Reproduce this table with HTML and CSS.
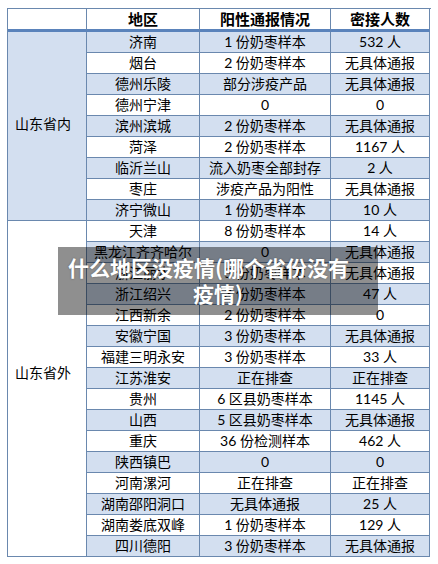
FILE: index.html
```html
<!DOCTYPE html>
<html lang="zh-CN">
<head>
<meta charset="utf-8">
<title>什么地区没疫情</title>
<link rel="stylesheet" href="styles.css">
</head>
<body>
<div class="page">
  <div class="grid">
    <div class="c h"></div>
    <div class="c h">地区</div>
    <div class="c h">阳性通报情况</div>
    <div class="c h">密接人数</div>

    <div class="c prov in">山东省内</div>
    <div class="c b">济南</div><div class="c b">1 份奶枣样本</div><div class="c b">532 人</div>
    <div class="c">烟台</div><div class="c">2 份奶枣样本</div><div class="c">无具体通报</div>
    <div class="c b">德州乐陵</div><div class="c b">部分涉疫产品</div><div class="c b">无具体通报</div>
    <div class="c">德州宁津</div><div class="c">0</div><div class="c">0</div>
    <div class="c b">滨州滨城</div><div class="c b">2 份奶枣样本</div><div class="c b">无具体通报</div>
    <div class="c">菏泽</div><div class="c">2 份奶枣样本</div><div class="c">1167 人</div>
    <div class="c b">临沂兰山</div><div class="c b">流入奶枣全部封存</div><div class="c b">2 人</div>
    <div class="c">枣庄</div><div class="c">涉疫产品为阳性</div><div class="c">无具体通报</div>
    <div class="c b">济宁微山</div><div class="c b">1 份奶枣样本</div><div class="c b">10 人</div>

    <div class="c prov out">山东省外</div>
    <div class="c">天津</div><div class="c">8 份奶枣样本</div><div class="c">14 人</div>
    <div class="c b">黑龙江齐齐哈尔</div><div class="c b">0</div><div class="c b">无具体通报</div>
    <div class="c">浙江丽水</div><div class="c">5 份奶枣样本</div><div class="c">无具体通报</div>
    <div class="c b">浙江绍兴</div><div class="c b">3 份奶枣样本</div><div class="c b">47 人</div>
    <div class="c">江西新余</div><div class="c">2 份奶枣样本</div><div class="c">0</div>
    <div class="c b">安徽宁国</div><div class="c b">3 份奶枣样本</div><div class="c b">无具体通报</div>
    <div class="c">福建三明永安</div><div class="c">3 份奶枣样本</div><div class="c">33 人</div>
    <div class="c b">江苏淮安</div><div class="c b">正在排查</div><div class="c b">正在排查</div>
    <div class="c">贵州</div><div class="c">6 区县奶枣样本</div><div class="c">1145 人</div>
    <div class="c b">山西</div><div class="c b">5 区县奶枣样本</div><div class="c b">无具体通报</div>
    <div class="c">重庆</div><div class="c">36 份检测样本</div><div class="c">462 人</div>
    <div class="c b">陕西镇巴</div><div class="c b">0</div><div class="c b">0</div>
    <div class="c">河南漯河</div><div class="c">正在排查</div><div class="c">正在排查</div>
    <div class="c b">湖南邵阳洞口</div><div class="c b">无具体通报</div><div class="c b">25 人</div>
    <div class="c">湖南娄底双峰</div><div class="c">1 份奶枣样本</div><div class="c">129 人</div>
    <div class="c b">四川德阳</div><div class="c b">3 份奶枣样本</div><div class="c b">无具体通报</div>
  </div>
  <div class="banner">
    <div class="l1">什么地区没疫情(哪个省份没有</div>
    <div class="l2">疫情)</div>
  </div>
</div>
</body>
</html>
```

FILE: styles.css
```css
html, body {
  margin: 0;
  padding: 0;
  background: #ffffff;
}
.page {
  position: relative;
  width: 438px;
  height: 564px;
  padding: 8px 0 0 7px;
  box-sizing: border-box;
  font-family: "Lato", "Noto Sans CJK SC", sans-serif;
  color: #000;
}
.grid {
  display: grid;
  grid-template-columns: 79px 113px 131px 99px;
  grid-template-rows: 23px repeat(25, 21px);
  width: 423px;
  border-top: 1px solid #6a88ae;
  border-left: 1px solid #6a88ae;
}
.c {
  box-sizing: border-box;
  border-right: 1px solid #6a88ae;
  border-bottom: 1px solid #6a88ae;
  display: flex;
  align-items: center;
  justify-content: center;
  font-size: 14px;
  line-height: 1;
  white-space: nowrap;
  background: #ffffff;
}
.c.b {
  background: #d3dff0;
}
.c.h {
  font-weight: bold;
  font-size: 15px;
  border-bottom: 3px solid #5a83bb;
}
.prov {
  justify-content: flex-start;
  padding-left: 7px;
}
.prov.in {
  grid-row: span 9;
  background: #d3dff0;
  padding-bottom: 4px;
}
.prov.out {
  grid-row: span 16;
  padding-bottom: 32px;
}
.banner {
  position: absolute;
  left: 58px;
  top: 247px;
  width: 320px;
  height: 68px;
  box-sizing: border-box;
  padding: 7px 10px 0 10px;
  background: rgba(0, 0, 0, 0.44);
  color: #ffffff;
  font-family: "Noto Sans CJK SC", sans-serif;
  font-weight: bold;
  font-size: 21px;
  line-height: 26px;
  text-shadow: 0 0 2px rgba(0, 0, 0, 0.35);
}
.l1 {
  text-align: left;
  white-space: nowrap;
}
.l2 {
  text-align: center;
}
```
